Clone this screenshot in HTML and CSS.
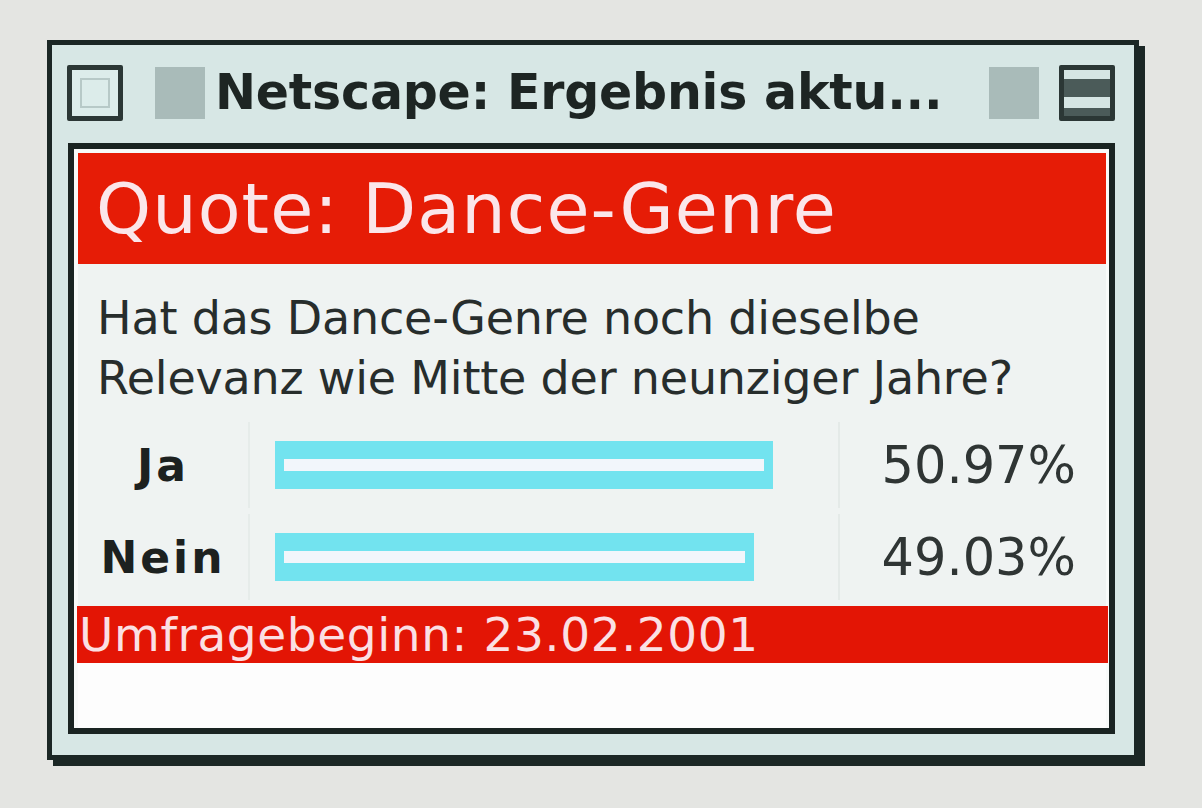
FILE: index.html
```html
<!DOCTYPE html>
<html lang="de">
<head>
<meta charset="utf-8">
<title>Netscape: Ergebnis aktuell</title>
<link rel="stylesheet" href="styles.css">
</head>
<body>
<div class="desk">
  <div class="window">
    <div class="titlebar">
      <div class="closebox"><span></span></div>
      <div class="stripe left"></div>
      <div class="title">Netscape: Ergebnis aktu...</div>
      <div class="stripe right"></div>
      <div class="collapsebox"></div>
    </div>
    <div class="panel">
      <div class="page">
        <div class="head">Quote: Dance-Genre</div>
        <div class="question">Hat das Dance-Genre noch dieselbe<br>Relevanz wie Mitte der neunziger Jahre?</div>
        <div class="results">
          <div class="row">
            <div class="label">Ja</div>
            <div class="barcell"><div class="bar" style="width:498px"></div></div>
            <div class="pct">50.97%</div>
          </div>
          <div class="row">
            <div class="label">Nein</div>
            <div class="barcell"><div class="bar" style="width:479px"></div></div>
            <div class="pct">49.03%</div>
          </div>
        </div>
        <div class="foot">Umfragebeginn: 23.02.2001</div>
        <div class="blank"></div>
      </div>
    </div>
  </div>
</div>
</body>
</html>
```
FILE: styles.css
```css
html, body {
  margin: 0;
  padding: 0;
}
body {
  background: #e4e5e2;
  width: 1202px;
  height: 808px;
  overflow: hidden;
  font-family: "DejaVu Sans", "Liberation Sans", sans-serif;
}
.desk {
  padding: 40px 0 0 47px;
}
.window {
  width: 1082px;
  background: #d7e7e5;
  border: 5px solid #1b2725;
  box-shadow: 6px 6px 0 #1b2725;
}
.titlebar {
  height: 95px;
  display: flex;
  align-items: center;
  padding: 0 19px 0 15px;
}
.closebox {
  width: 46px;
  height: 46px;
  border: 5px solid #2b3735;
  border-radius: 2px;
  background: #dcecea;
  display: flex;
  align-items: center;
  justify-content: center;
  flex: none;
}
.closebox span {
  width: 30px;
  height: 30px;
  border: 2px solid #b7c9c7;
  box-sizing: border-box;
}
.stripe {
  width: 50px;
  height: 52px;
  background: #a9bbb9;
  flex: none;
}
.stripe.left {
  margin-left: 32px;
}
.stripe.right {
  margin-left: 50px;
}
.title {
  margin-left: 10px;
  flex: 1;
  min-width: 0;
  overflow: visible;
  font-weight: bold;
  font-size: 49px;
  letter-spacing: -0.2px;
  color: #1d2523;
  white-space: nowrap;
  line-height: 1;
}
.collapsebox {
  margin-left: 20px;
  width: 46px;
  height: 46px;
  border: 5px solid #2b3735;
  border-radius: 2px;
  flex: none;
  background: linear-gradient(#d6e6e4 0, #d6e6e4 20%, #4b5b59 20%, #4b5b59 58%, #d6e6e4 58%, #d6e6e4 82%, #4b5b59 82%);
}
.panel {
  margin: 3px 19px 21px 16px;
  border: 6px solid #1a2422;
  background: #f8faf9;
}
.page {
  padding: 4px 3px 0 4px;
  display: flex;
  flex-direction: column;
}
.head {
  background: #e61c06;
  color: #fbe6ea;
  height: 111px;
  display: flex;
  align-items: center;
  padding-left: 18px;
  font-size: 70px;
  letter-spacing: 1.1px;
  line-height: 1;
}
.question {
  background: #eff3f2;
  padding: 24px 0 14px 19px;
  font-size: 46px;
  line-height: 60px;
  color: #272d2c;
  letter-spacing: -0.2px;
}
.results {
  background: #eff3f2;
  display: flex;
  flex-direction: column;
  gap: 6px;
  padding-bottom: 6px;
}
.row {
  display: grid;
  grid-template-columns: 172px 590px 1fr;
  height: 86px;
}
.label {
  display: flex;
  align-items: center;
  justify-content: center;
  font-weight: bold;
  font-size: 44px;
  letter-spacing: 3px;
  color: #1c2120;
  border-right: 2px solid #e6ecea;
}
.barcell {
  display: flex;
  align-items: center;
  padding-left: 25px;
  border-right: 2px solid #e4eae8;
}
.bar {
  height: 48px;
  background: #72e3ef;
  position: relative;
  box-sizing: border-box;
}
.bar::after {
  content: "";
  position: absolute;
  left: 9px;
  right: 9px;
  top: 18px;
  height: 12px;
  background: #f2f6fb;
}
.pct {
  display: flex;
  align-items: center;
  justify-content: flex-end;
  padding-right: 30px;
  font-size: 51px;
  color: #2f3534;
}
.foot {
  margin: 0 -2px 0 -1px;
  background: #e31505;
  color: #fbe0e4;
  height: 57px;
  display: flex;
  align-items: center;
  font-size: 47px;
  letter-spacing: 0.6px;
  line-height: 1;
  padding-left: 2px;
}
.blank {
  height: 65px;
  background: #fdfdfd;
}
```
